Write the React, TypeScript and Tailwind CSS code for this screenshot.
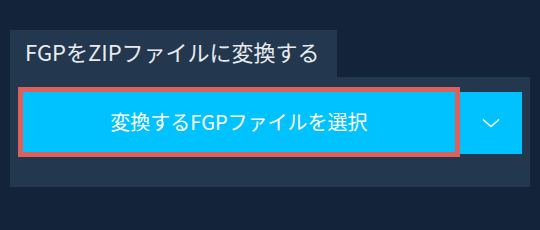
export default function App() {
  return (
    <main
      className="w-[540px] h-[230px] bg-[#13243a] pt-[30px] px-[10px]"
      style={{ fontFamily: '"Noto Sans CJK JP", "Noto Sans", sans-serif' }}
    >
      <div className="w-[327px] h-[47px] bg-[#23374e] pl-[15px] pt-[5px] text-[22px] leading-[32px] text-[#e8ecf0]">
        FGPをZIPファイルに変換する
      </div>

      <section className="w-[520px] h-[110px] bg-[#23374e] pl-[8px] pt-[10px]">
        <div className="flex items-start">
          <button className="w-[442px] h-[70px] border-[5px] border-[#dc605c] bg-[#00c2ff] text-white text-[20px] flex items-center justify-center">
            変換するFGPファイルを選択
          </button>
          <button className="w-[62px] h-[62px] mt-[5px] bg-[#00c2ff] text-white flex items-center justify-center">
            <svg width="18" height="10" viewBox="0 0 18 10" fill="none">
              <path d="M1 1.5 L9 8.5 L17 1.5" stroke="white" strokeWidth="1.5" />
            </svg>
          </button>
        </div>
      </section>
    </main>
  );
}
